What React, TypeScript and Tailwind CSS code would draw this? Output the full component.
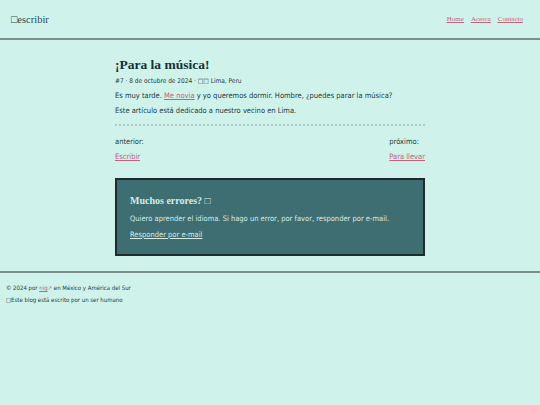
import React from 'react';

export default function App() {
  return (
    <div className="min-h-[405px] bg-[#cff2ea] text-[#1f3b3e] font-['DejaVu_Sans',sans-serif] [font-stretch:condensed]">
      {/* Header */}
      <header className="h-[40px] border-b-2 border-[#7d908b] flex items-center justify-between pl-[11px] pr-[17px]">
        <a href="/" className="font-['Liberation_Serif',serif] [font-stretch:normal] text-[10.5px] text-[#2d4c50] pt-px">
          □escribir
        </a>
        <nav className="flex gap-[7px] font-['Liberation_Serif',serif] [font-stretch:normal] text-[7px] text-[#c0637c] underline">
          <a href="#">Home</a>
          <a href="#">Acerca</a>
          <a href="#">Contacto</a>
        </nav>
      </header>

      {/* Article */}
      <main className="w-[310px] mx-auto pt-[16px] pb-[15px]">
        <h1 className="font-['Liberation_Serif',serif] [font-stretch:normal] font-bold text-[13.5px] text-[#12303a] leading-[17px]">
          ¡Para la música!
        </h1>
        <p className="text-[6.5px] mt-[3.5px] leading-[9px]">
          #7 · 8 de octubre de 2024 · □□ Lima, Peru
        </p>
        <p className="text-[7.5px] mt-[5.5px] leading-[10px]">
          Es muy tarde. <a href="#" className="text-[#c0637c] underline">Me novia</a> y yo queremos dormir. Hombre, ¿puedes parar la música?
        </p>
        <p className="text-[7.5px] mt-[5px] leading-[10px]">
          Este artículo está dedicado a nuestro vecino en Lima.
        </p>
        <hr className="mt-[8px] border-0 border-t-2 border-dotted border-[#b3c9c3]" />

        <div className="flex justify-between mt-[11px] text-[7.5px] leading-[10px]">
          <div className="flex flex-col gap-[5px]">
            <span>anterior:</span>
            <a href="#" className="text-[#c0637c] underline">Escribir</a>
          </div>
          <div className="flex flex-col gap-[5px]">
            <span>próximo:</span>
            <a href="#" className="text-[#c0637c] underline">Para llevar</a>
          </div>
        </div>

        <section className="mt-[16px] h-[78px] bg-[#3f6e72] border-2 border-[#1e2d2b] px-[13px] pt-[14px] text-[#d3ece7]">
          <h2 className="font-['Liberation_Serif',serif] [font-stretch:normal] font-bold text-[10px] leading-[14px]">
            Muchos errores? □
          </h2>
          <p className="text-[7.5px] mt-[5.5px] leading-[9px]">
            Quiero aprender el idioma. Si hago un error, por favor, responder por e-mail.
          </p>
          <a href="#" className="block text-[7.5px] mt-[7px] leading-[9px] underline">
            Responder por e-mail
          </a>
        </section>
      </main>

      {/* Footer */}
      <footer className="border-t-2 border-[#7d908b] px-[6px] pt-[11px] text-[6px] leading-[8px] text-[#1f3b3e]">
        <p>
          © 2024 por <a href="#" className="text-[#c0637c] underline">nig</a><span className="text-[#c0637c]">↗</span> en México y América del Sur
        </p>
        <p className="mt-[4px]">□Este blog está escrito por un ser humano</p>
      </footer>
    </div>
  );
}
